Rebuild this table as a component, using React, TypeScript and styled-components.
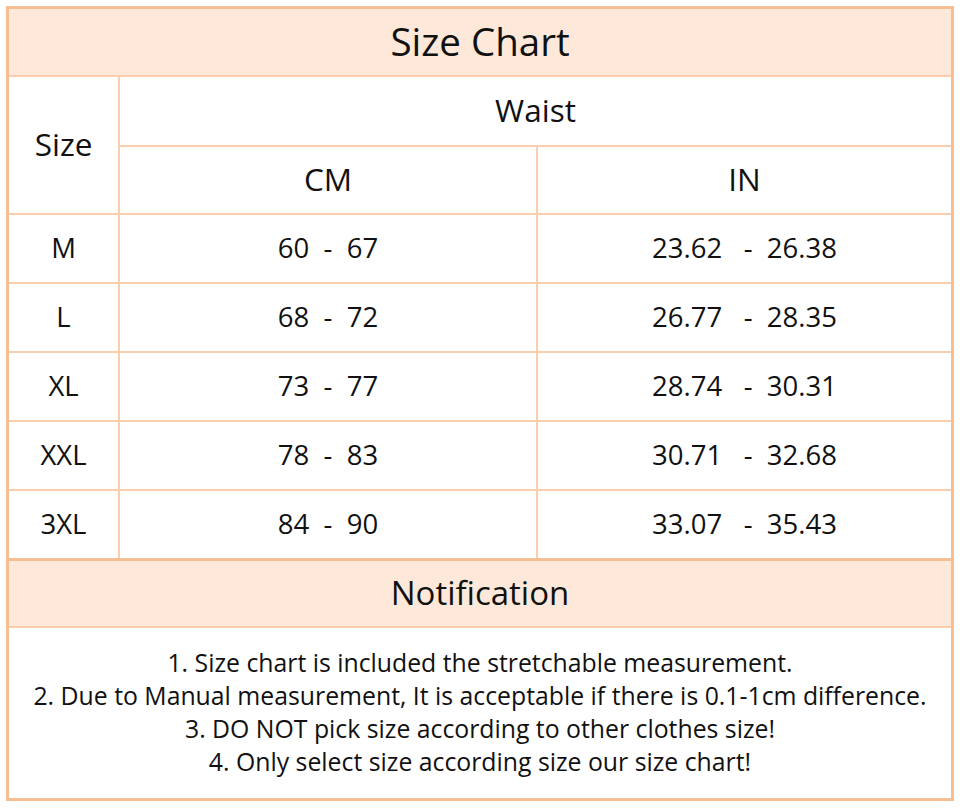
import React from "react";
import styled, { createGlobalStyle } from "styled-components";

const Global = createGlobalStyle`
  html, body { margin: 0; padding: 0; background: #ffffff; }
  body { font-family: "Open Sans", "Noto Sans", "Liberation Sans", sans-serif; color: #111111; }
`;

const Frame = styled.div`
  box-sizing: border-box;
  margin: 6px 0 0 6px;
  width: 948px;
  border: 3px solid #f7be93;
  background: #ffffff;
`;

const Table = styled.div`
  display: grid;
  grid-template-columns: 109px 416px 413px;
  grid-template-rows: 66px 68px 66px repeat(5, 67px);
  gap: 2px;
  background: #fbcfae;
`;

const Cell = styled.div<{ $head?: boolean; $size?: number; $span?: number; $rows?: number }>`
  box-sizing: border-box;
  display: flex;
  align-items: center;
  justify-content: center;
  padding-bottom: 3px;
  background: ${(p) => (p.$head ? "#fde8d9" : "#ffffff")};
  font-size: ${(p) => p.$size ?? 27.5}px;
  white-space: pre;
  grid-column: ${(p) => (p.$span ? `span ${p.$span}` : "auto")};
  grid-row: ${(p) => (p.$rows ? `span ${p.$rows}` : "auto")};
`;

const Notice = styled.div`
  border-top: 3px solid #f7be93;
  display: grid;
  grid-template-rows: 65px 170px;
  gap: 2px;
  background: #fbcfae;
`;

const NoticeHead = styled.div`
  box-sizing: border-box;
  display: flex;
  align-items: center;
  justify-content: center;
  padding-bottom: 2px;
  background: #fde8d9;
  font-size: 33px;
`;

const NoticeBody = styled.div`
  background: #ffffff;
  display: flex;
  flex-direction: column;
  align-items: center;
  padding-top: 18px;
  font-size: 24.8px;
  line-height: 33px;
`;

const rows = [
  ["M", "60  -  67", "23.62   -  26.38"],
  ["L", "68  -  72", "26.77   -  28.35"],
  ["XL", "73  -  77", "28.74   -  30.31"],
  ["XXL", "78  -  83", "30.71   -  32.68"],
  ["3XL", "84  -  90", "33.07   -  35.43"],
];

const notes = [
  "1. Size chart is included the stretchable measurement.",
  "2. Due to Manual measurement, It is acceptable if there is 0.1-1cm difference.",
  "3. DO NOT pick size according to other clothes size!",
  "4. Only select size according size our size chart!",
];

export default function App() {
  return (
    <>
      <Global />
      <Frame>
        <Table>
          <Cell $head $span={3} $size={38.5}>Size Chart</Cell>
          <Cell $rows={2} $size={31.5}>Size</Cell>
          <Cell $span={2} $size={31.5}>Waist</Cell>
          <Cell $size={31.5}>CM</Cell>
          <Cell $size={31.5}>IN</Cell>
          {rows.map((r) => (
            <React.Fragment key={r[0]}>
              <Cell>{r[0]}</Cell>
              <Cell>{r[1]}</Cell>
              <Cell>{r[2]}</Cell>
            </React.Fragment>
          ))}
        </Table>
        <Notice>
          <NoticeHead>Notification</NoticeHead>
          <NoticeBody>
            {notes.map((n) => (
              <div key={n}>{n}</div>
            ))}
          </NoticeBody>
        </Notice>
      </Frame>
    </>
  );
}
